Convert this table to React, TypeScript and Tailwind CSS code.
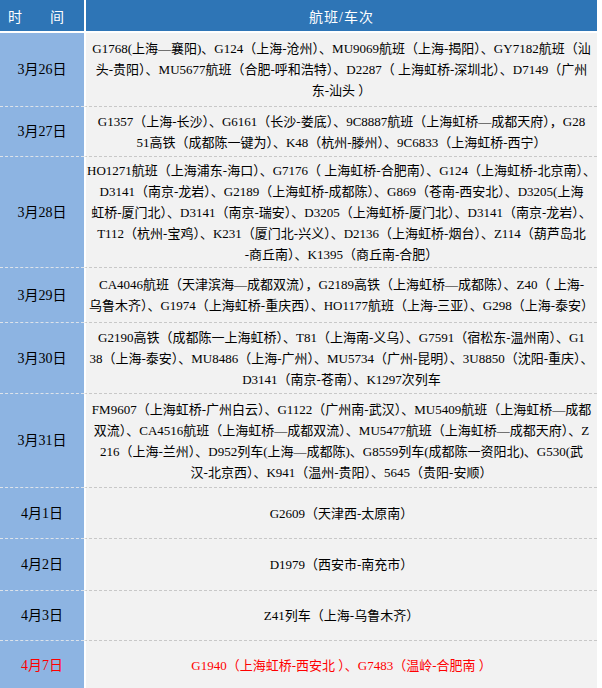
import React from "react";

type Row = { date: string; h: string; lines: string[]; red?: boolean };

const rows: Row[] = [
  {
    date: "3月26日",
    h: "h-[74px]",
    lines: [
      "G1768(上海—襄阳)、G124（上海-沧州）、MU9069航班（上海-揭阳）、GY7182航班（汕",
      "头-贵阳）、MU5677航班（合肥-呼和浩特）、D2287（ 上海虹桥-深圳北）、D7149（广州",
      "东-汕头 ）",
    ],
  },
  {
    date: "3月27日",
    h: "h-[50px]",
    lines: [
      "G1357（上海-长沙）、G6161（长沙-娄底）、9C8887航班（上海虹桥—成都天府），G28",
      "51高铁（成都陈一键为）、K48（杭州-滕州）、9C6833（上海虹桥-西宁）",
    ],
  },
  {
    date: "3月28日",
    h: "h-[111px]",
    lines: [
      "HO1271航班（上海浦东-海口）、G7176（ 上海虹桥-合肥南）、G124（上海虹桥-北京南）、",
      "D3141（南京-龙岩）、G2189（上海虹桥-成都陈）、G869（苍南-西安北）、D3205(上海",
      "虹桥-厦门北）、D3141（南京-瑞安）、D3205（上海虹桥-厦门北）、D3141（南京-龙岩）、",
      "T112（杭州-宝鸡）、K231（厦门北-兴义）、D2136（上海虹桥-烟台）、Z114（葫芦岛北",
      "-商丘南）、K1395（商丘南-合肥）",
    ],
  },
  {
    date: "3月29日",
    h: "h-[55px]",
    lines: [
      "CA4046航班（天津滨海—成都双流），G2189高铁（上海虹桥—成都陈）、Z40（ 上海-",
      "乌鲁木齐）、G1974（上海虹桥-重庆西）、HO1177航班（上海-三亚）、G298（上海-泰安）",
    ],
  },
  {
    date: "3月30日",
    h: "h-[71px]",
    lines: [
      "G2190高铁（成都陈一上海虹桥）、T81（上海南-义乌）、G7591（宿松东-温州南）、G1",
      "38（上海-泰安）、MU8486（上海-广州）、MU5734（广州-昆明）、3U8850（沈阳-重庆）、",
      "D3141（南京-苍南）、K1297次列车",
    ],
  },
  {
    date: "3月31日",
    h: "h-[94px]",
    lines: [
      "FM9607（上海虹桥-广州白云）、G1122（广州南-武汉）、MU5409航班（上海虹桥—成都",
      "双流）、CA4516航班（上海虹桥—成都双流）、MU5477航班（上海虹桥—成都天府）、Z",
      "216（上海-兰州）、D952列车(上海—成都陈)、G8559列车(成都陈一资阳北)、G530(武",
      "汉-北京西）、K941（温州-贵阳）、5645（贵阳-安顺）",
    ],
  },
  { date: "4月1日", h: "h-[51px]", lines: ["G2609（天津西-太原南）"] },
  { date: "4月2日", h: "h-[52px]", lines: ["D1979（西安市-南充市）"] },
  { date: "4月3日", h: "h-[50px]", lines: ["Z41列车（上海-乌鲁木齐）"] },
  {
    date: "4月7日",
    h: "h-[50px]",
    red: true,
    lines: ["G1940（上海虹桥-西安北 ）、G7483（温岭-合肥南 ）"],
  },
];

export default function App() {
  return (
    <div
      className="w-[602px] h-[688px] overflow-hidden bg-white"
      style={{ fontFamily: '"Liberation Serif", "Noto Sans CJK SC", serif' }}
    >
      <div className="w-[597px] flex flex-col">
        <div className="flex h-[33px] border-b-2 border-white">
          <div className="w-[84px] bg-[#2e75b6] text-white text-[14px] flex items-center pl-[8px] pt-[4px]">
            <span>时</span>
            <span className="ml-[28px]">间</span>
          </div>
          <div className="flex-1 bg-[#2e75b6] border-l-2 border-white text-white text-[14px] tracking-[1px] flex items-center justify-center pt-[4px]">
            航班/车次
          </div>
        </div>
        {rows.map((r, i) => (
          <div key={i} className={`flex ${r.h}`}>
            <div
              className={`w-[84px] bg-[#8db4e2] border-b border-dashed border-[#dde3ea] flex items-center justify-center text-[14px] ${
                r.red ? "text-[#ff0000]" : "text-black"
              }`}
            >
              {r.date}
            </div>
            <div
              className={`flex-1 bg-[#f2f2f2] border-l-2 border-white border-b border-b-[#c8c8c8] [border-bottom-style:dashed] flex flex-col items-center justify-center text-[13px] leading-[21px] ${
                r.red ? "text-[#ff0000]" : "text-black"
              }`}
            >
              {r.lines.map((l, j) => (
                <div key={j} className="whitespace-nowrap">
                  {l}
                </div>
              ))}
            </div>
          </div>
        ))}
      </div>
    </div>
  );
}
